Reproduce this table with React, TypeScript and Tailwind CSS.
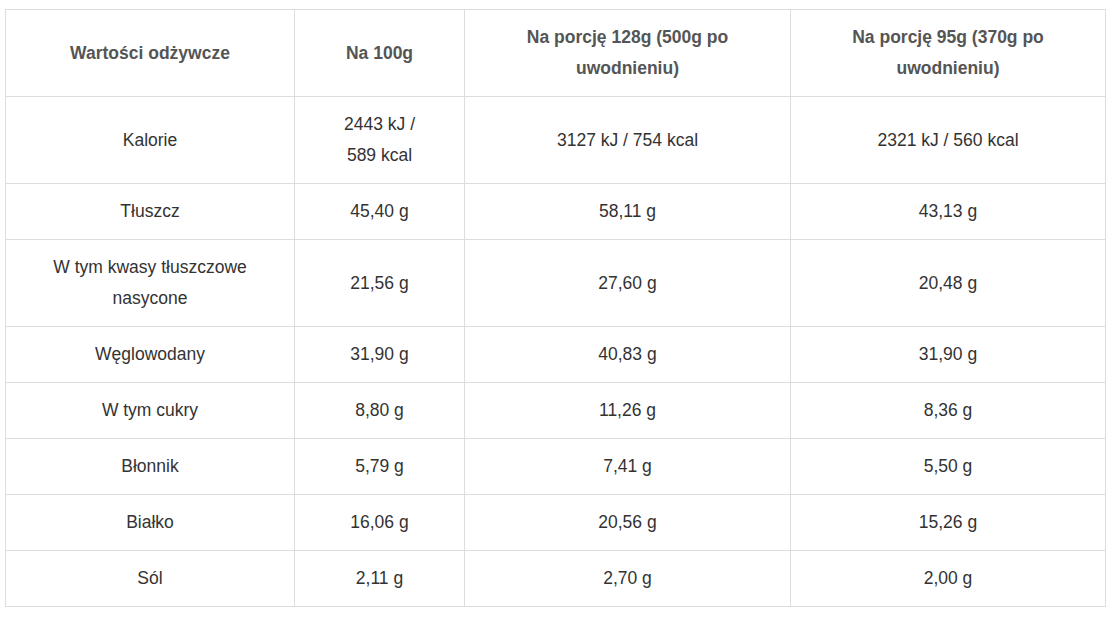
const rows = [
  ["Kalorie", "2443 kJ / 589 kcal", "3127 kJ / 754 kcal", "2321 kJ / 560 kcal"],
  ["Tłuszcz", "45,40 g", "58,11 g", "43,13 g"],
  ["W tym kwasy tłuszczowe nasycone", "21,56 g", "27,60 g", "20,48 g"],
  ["Węglowodany", "31,90 g", "40,83 g", "31,90 g"],
  ["W tym cukry", "8,80 g", "11,26 g", "8,36 g"],
  ["Błonnik", "5,79 g", "7,41 g", "5,50 g"],
  ["Białko", "16,06 g", "20,56 g", "15,26 g"],
  ["Sól", "2,11 g", "2,70 g", "2,00 g"],
];

const headers = [
  "Wartości odżywcze",
  "Na 100g",
  "Na porcję 128g (500g po uwodnieniu)",
  "Na porcję 95g (370g po uwodnieniu)",
];

export default function App() {
  return (
    <div className="min-h-[620px] w-[1116px] bg-white pt-[9px] pl-[5px] font-['Liberation_Sans',Arial,sans-serif]">
      <table className="w-[1100px] table-fixed border-collapse text-center text-[17.5px] leading-[31px]">
        <colgroup>
          <col className="w-[289px]" />
          <col className="w-[170px]" />
          <col className="w-[326px]" />
          <col className="w-[315px]" />
        </colgroup>
        <thead>
          <tr>
            {headers.map((h) => (
              <th
                key={h}
                className="border border-[#dddddd] px-[38px] py-[12px] font-bold text-[#555555]"
              >
                {h}
              </th>
            ))}
          </tr>
        </thead>
        <tbody>
          {rows.map((row) => (
            <tr key={row[0]}>
              {row.map((cell, i) => (
                <td
                  key={i}
                  className={`border border-[#dddddd] py-[12px] text-[#333333] ${
                    i == 1 ? "px-[40px]" : "px-[25px]"
                  }`}
                >
                  {cell}
                </td>
              ))}
            </tr>
          ))}
        </tbody>
      </table>
    </div>
  );
}
